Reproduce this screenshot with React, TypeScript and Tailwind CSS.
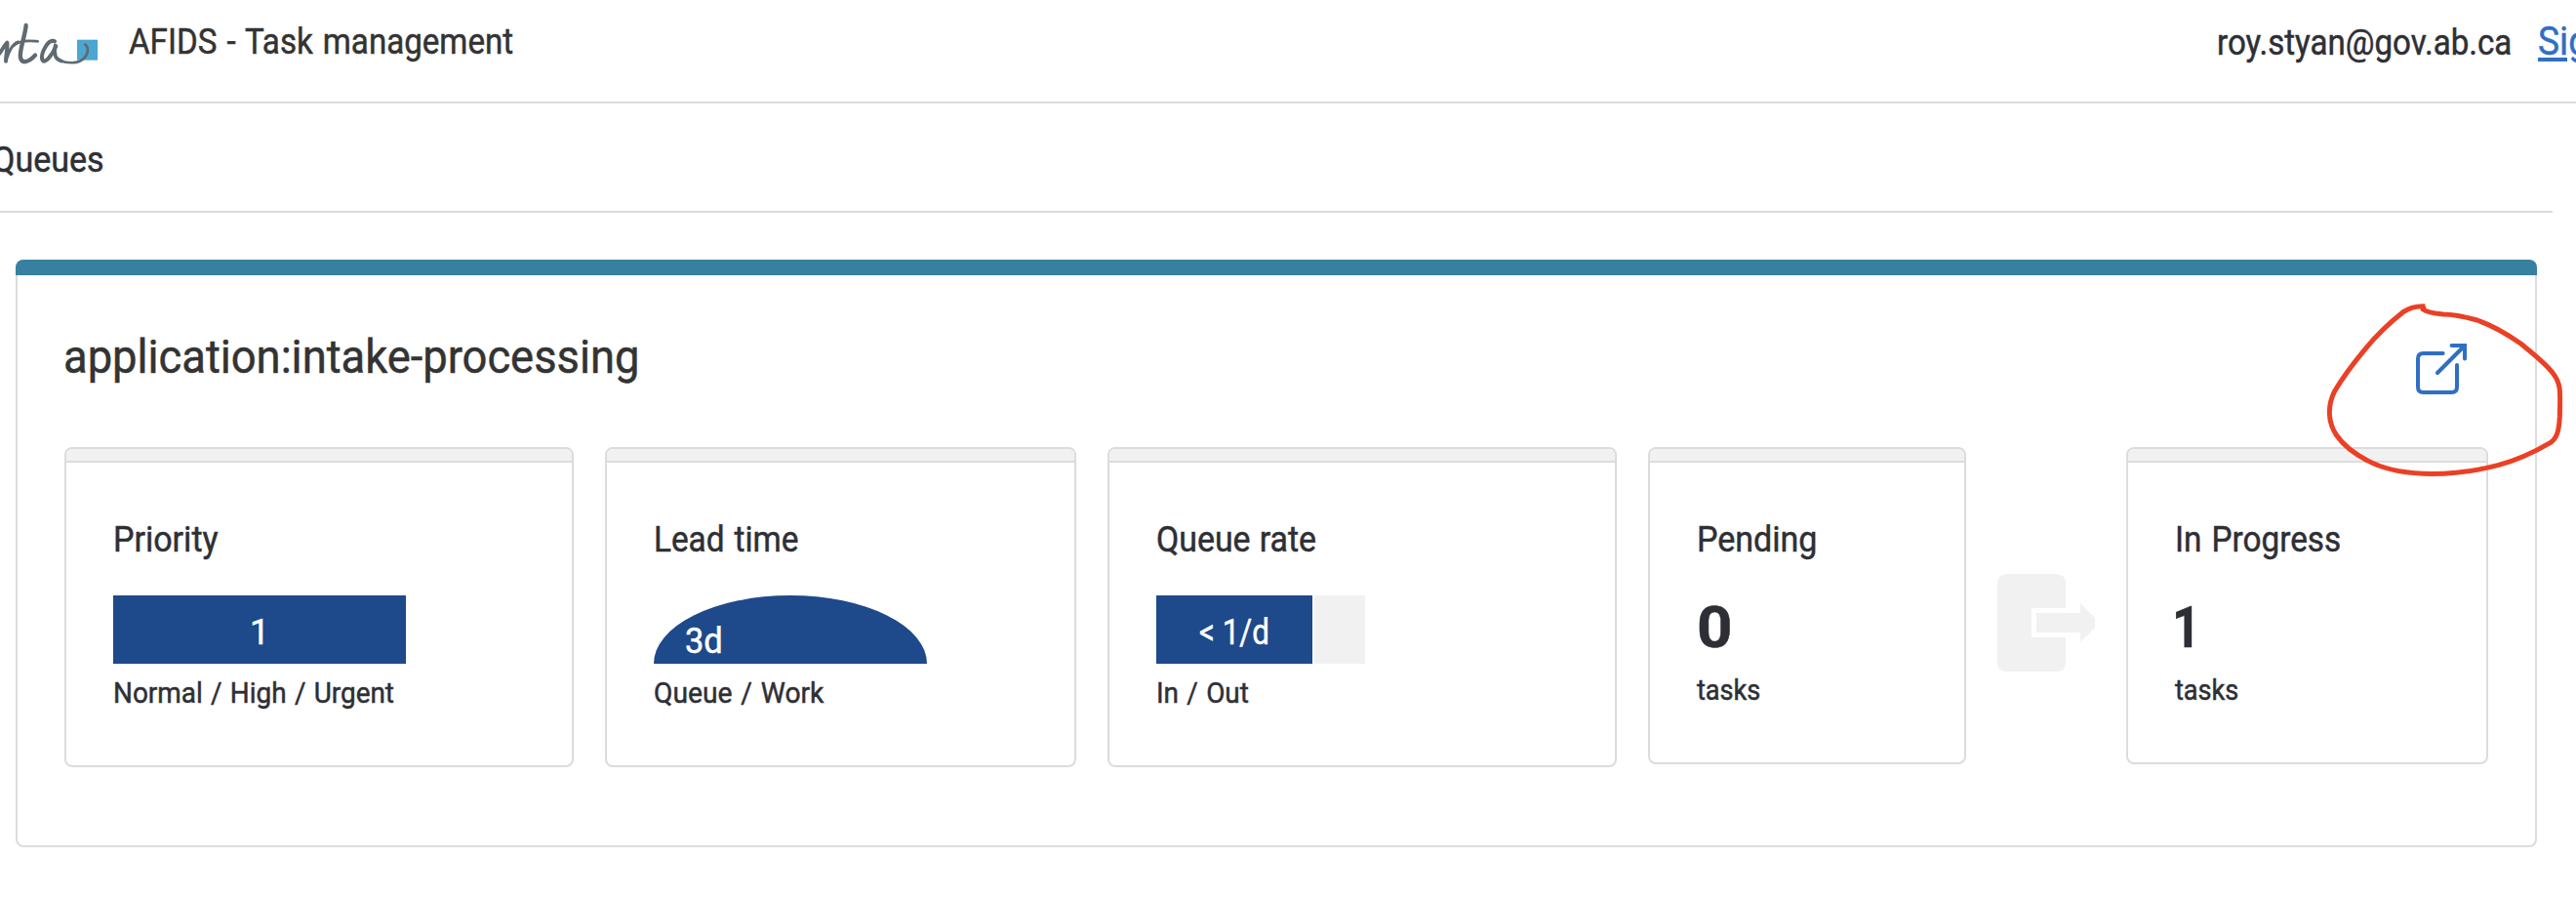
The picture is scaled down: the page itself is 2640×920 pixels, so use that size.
import type { ReactNode } from "react";
import { clsx } from "clsx";

function Logo() {
  return (
    <svg className="mt-2.5 h-[70px] w-[110px] shrink-0" viewBox="0 0 330 210" fill="none">
      <rect x="237" y="92" width="63" height="63" fill="#4ba7d1" />
      <g stroke="#5f6a72" strokeLinecap="round" strokeLinejoin="round">
        <path d="M-6 140 C4 128 12 112 22 101 C24 120 18 140 18 158" strokeWidth="12" />
        <path d="M19 154 C26 132 36 104 56 99" strokeWidth="9" />
        <path d="M80 48 C78 78 58 128 63 148 C68 168 90 160 108 140" strokeWidth="13" />
        <path d="M42 110 C64 90 98 96 116 97" strokeWidth="8" />
        <path d="M168 97 C148 88 124 134 130 154 C136 168 160 142 172 112" strokeWidth="12" />
        <path d="M170 110 C164 140 172 154 190 158" strokeWidth="11" />
        <path d="M184 156 C212 167 240 164 255 152 C272 138 274 116 262 107" strokeWidth="8" />
      </g>
    </svg>
  );
}

function Text({ className, children }: { className?: string; children: ReactNode }) {
  return <span className={clsx("block origin-left whitespace-pre", className)}>{children}</span>;
}

function Panel({ className, title, titleClass, children }: {
  className: string;
  title: string;
  titleClass: string;
  children: ReactNode;
}) {
  return (
    <section className={clsx("shrink-0 overflow-hidden rounded-lg border-2 border-[#dcdcdc] bg-white", className)}>
      <div className="h-3.5 border-b-2 border-[#dcdcdc] bg-[#f1f1f1]" />
      <div className="px-12 pt-[55px]">
        <Text className={clsx("text-4xl leading-[48px]", titleClass)}>{title}</Text>
        {children}
      </div>
    </section>
  );
}

function Caption({ className, children }: { className: string; children: ReactNode }) {
  return <Text className={clsx("text-[30px] leading-10", className)}>{children}</Text>;
}

function OpenIcon() {
  return (
    <svg className="mt-[58px] mr-4 size-16" viewBox="0 0 64 64" fill="none" stroke="#2f6fc3" strokeWidth="4" strokeLinecap="round" strokeLinejoin="round">
      <path d="M33.7 22H13.5Q8 22 8 27.5V56.5Q8 62 13.5 62H42.5Q48 62 48 56.5V34" />
      <path d="M28 42 55.5 14.5" />
      <path d="M42.5 14H56V27.5" strokeLinejoin="miter" />
    </svg>
  );
}

function TransferIcon() {
  return (
    <svg className="mx-8 mt-[129.5px] size-[100px] shrink-0" viewBox="0 0 100 100" fill="#f1f1f1">
      <path d="M10 0H60Q70 0 70 10V35H35V65H70V90Q70 100 60 100H10Q0 100 0 90V10Q0 0 10 0Z" />
      <path d="M40 40H85V30L105 50L85 70V60H40Z" />
    </svg>
  );
}

export default function App() {
  return (
    <div className="relative h-[920px] w-[2640px] overflow-hidden bg-white font-['Roboto',sans-serif] text-[#2e2f35] [-webkit-text-stroke:0.5px_currentColor]">
      <header className="flex h-[106px] items-start overflow-hidden border-b-2 border-[#dcdcdc]">
        <Logo />
        <Text className="mt-[19px] ml-[22px] scale-x-[.92] text-4xl leading-[48px] [word-spacing:2px] text-[#333]">AFIDS - Task management</Text>
        <div className="ml-auto flex w-[368px] shrink-0 items-start">
          <Text className="mt-5 w-[329px] shrink-0 scale-x-[.919] text-4xl leading-[48px]">roy.styan@gov.ab.ca</Text>
          <a className="mt-[19px] block shrink-0 origin-left scale-x-[.93] text-[40px] leading-[48px] whitespace-nowrap text-[#2f6fc3] underline decoration-4 underline-offset-[3px]">Sign out</a>
        </div>
      </header>

      <nav className="h-28 w-[2616px] border-b-2 border-[#dcdcdc] pt-[34px]">
        <Text className="-ml-2 w-fit scale-x-[.945] text-4xl leading-[48px]">Queues</Text>
      </nav>

      <main className="mt-12 ml-4 h-[602px] w-[2584px] rounded-lg border-2 border-t-0 border-[#dcdcdc]">
        <div className="-mx-0.5 h-4 rounded-t-lg bg-[#3780a0]" />
        <div className="flex h-44 items-start justify-between px-12">
          <Text className="mt-[52px] -ml-px scale-x-[.944] text-5xl leading-[64px] text-[#333]">application:intake-processing</Text>
          <OpenIcon />
        </div>

        <div className="flex items-start px-12">
          <Panel className="mr-8 h-[328px] w-[522px]" title="Priority" titleClass="scale-x-[.944]">
            <div className="mt-[33px] flex h-[70px] w-[300px] items-center justify-center bg-[#1e498a] pt-[5px] text-4xl leading-[48px] text-white">1</div>
            <Caption className="mt-2.5 scale-x-[.93] [word-spacing:1.5px]">Normal / High / Urgent</Caption>
          </Panel>
          <Panel className="mr-8 h-[328px] w-[483px]" title="Lead time" titleClass="scale-x-[.925] [word-spacing:2px]">
            <div className="mt-[33px] h-[70px] w-[280px] rounded-t-[140px_70px] bg-[#1e498a] pt-[22.5px] pl-8 text-white">
              <Text className="scale-x-[.957] text-4xl leading-[48px]">3d</Text>
            </div>
            <Caption className="mt-2.5 scale-x-[.94] [word-spacing:2px]">Queue / Work</Caption>
          </Panel>
          <Panel className="mr-8 h-[328px] w-[522px]" title="Queue rate" titleClass="scale-x-[.94] [word-spacing:1px]">
            <div className="mt-[33px] flex h-[70px] gap-0.5">
              <div className="w-40 bg-[#1e498a] pt-[13.5px] pl-11 text-white">
                <Text className="scale-x-[.87] text-4xl leading-[48px]">{"< 1/d"}</Text>
              </div>
              <div className="w-[52px] bg-[#f1f1f1]" />
            </div>
            <Caption className="mt-2.5 scale-x-[.93] [word-spacing:1.5px]">In / Out</Caption>
          </Panel>
          <Panel className="h-[325px] w-[326px]" title="Pending" titleClass="scale-x-[.945]">
            <Text className="mt-[30px] scale-x-[1.06] text-[60px] leading-[72px] font-bold">0</Text>
            <Caption className="mt-2 scale-x-[.904]">tasks</Caption>
          </Panel>
          <TransferIcon />
          <Panel className="h-[325px] w-[371px]" title="In Progress" titleClass="scale-x-[.925] [word-spacing:2px]">
            <Text className="mt-[30px] -ml-[3px] scale-x-[.85] text-[60px] leading-[72px] font-bold">1</Text>
            <Caption className="mt-2 scale-x-[.904]">tasks</Caption>
          </Panel>
        </div>
      </main>

      <svg className="pointer-events-none absolute top-[290px] left-[2360px] h-[220px] w-[280px]" viewBox="0 0 840 660" fill="none">
        <path
          d="M376 71 C348 70 330 74 310 88 C262 126 222 166 190 205 C156 246 124 288 98 332 C74 380 78 430 104 468 C126 500 160 525 198 545 C250 574 310 583 370 586 C460 589 530 578 600 560 C670 541 728 510 762 490 C782 476 788 452 790 410 C792 330 794 310 770 278 C744 244 704 214 670 186 C630 158 582 130 536 114 C500 104 470 96 432 96 C400 93 382 90 370 81 L372 70"
          stroke="#ea4025"
          strokeWidth="15"
          strokeLinejoin="miter"
        />
      </svg>
    </div>
  );
}
